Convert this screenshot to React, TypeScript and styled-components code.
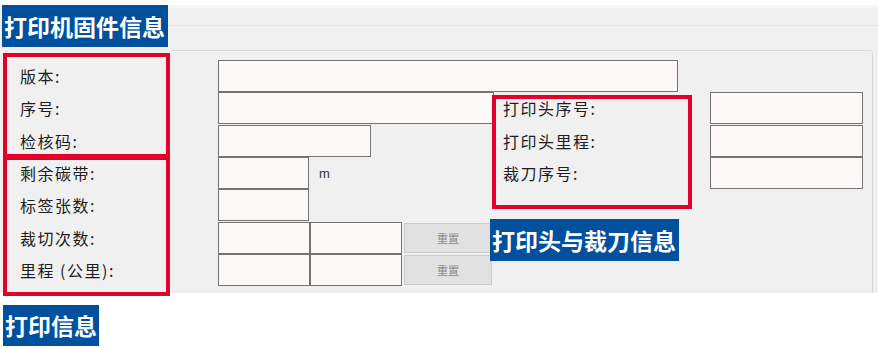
import React from "react";
import styled, { createGlobalStyle } from "styled-components";

const GlobalStyle = createGlobalStyle`
  html, body {
    margin: 0;
    padding: 0;
    background: #ffffff;
  }
  body {
    font-family: "Noto Sans CJK SC", "Liberation Sans", sans-serif;
  }
`;

const Page = styled.div`
  position: relative;
  width: 878px;
  height: 348px;
  overflow: hidden;
  background: #ffffff;
  padding-top: 5px;
  box-sizing: border-box;
`;

const Panel = styled.div`
  height: 288px;
  background: #f0f0f0;
  border-top: 3px solid #f6f6f6;
  box-sizing: border-box;
  display: flex;
  flex-direction: column;
  overflow: hidden;
`;

const TabStrip = styled.div`
  height: 17px;
  flex: none;
  border-bottom: 1px solid #e3e3e3;
`;

const GroupBox = styled.div`
  flex: 1;
  margin: 24px 5px 0 5px;
  border-left: 1px solid #dadada;
  border-right: 1px solid #d6d6d6;
  border-radius: 0 4px 0 0;
  background: linear-gradient(#dadada, #dadada) no-repeat right top / calc(100% - 165px) 1px;
  padding: 10px 0 0 14px;
`;

const Form = styled.div`
  display: grid;
  grid-template-columns: 198px 276px 216px 153px;
  grid-auto-rows: 32.33px;
`;

const Label = styled.div<{ $indent?: number }>`
  display: flex;
  align-items: center;
  font-size: 16px;
  letter-spacing: 1.5px;
  line-height: 1;
  color: #1e1e1e;
  padding-left: ${(p) => p.$indent ?? 0}px;
`;

const Controls = styled.div<{ $span?: boolean }>`
  display: flex;
  align-items: stretch;
  grid-column: ${(p) => (p.$span ? "2 / 4" : "auto")};
`;

const Empty = styled.div``;

const Field = styled.div<{ $w: number }>`
  width: ${(p) => p.$w}px;
  height: 32px;
  box-sizing: border-box;
  border: 1px solid #747474;
  background: #fdf9f9;
  flex: none;
`;

const Unit = styled.span`
  align-self: center;
  margin-left: 10px;
  font-family: "Liberation Sans", sans-serif;
  font-size: 13px;
  color: #333333;
`;

const ResetButton = styled.div`
  width: 88px;
  height: 30px;
  margin: 1px 0 0 2px;
  box-sizing: border-box;
  border: 1px solid #cccccc;
  background: #e1e1e1;
  display: flex;
  align-items: center;
  justify-content: center;
  font-size: 11px;
  color: #8a8a8a;
  flex: none;
`;

const RedFrame = styled.div<{ $x: number; $y: number; $w: number; $h: number }>`
  position: absolute;
  left: ${(p) => p.$x}px;
  top: ${(p) => p.$y}px;
  width: ${(p) => p.$w}px;
  height: ${(p) => p.$h}px;
  box-sizing: border-box;
  border: 4px solid #e4002d;
`;

const BlueTag = styled.div<{ $x: number; $y: number; $w: number; $h: number }>`
  position: absolute;
  left: ${(p) => p.$x}px;
  top: ${(p) => p.$y}px;
  width: ${(p) => p.$w}px;
  height: ${(p) => p.$h}px;
  box-sizing: border-box;
  background: #00509e;
  color: #ffffff;
  font-size: 23px;
  font-weight: 700;
  line-height: 1;
  display: flex;
  align-items: center;
  padding-left: 2px;
  white-space: nowrap;
`;

export default function App() {
  return (
    <Page>
      <GlobalStyle />
      <Panel>
        <TabStrip />
        <GroupBox>
          <Form>
            <Label>版本:</Label>
            <Controls $span>
              <Field $w={460} />
            </Controls>
            <Empty />

            <Label>序号:</Label>
            <Controls>
              <Field $w={276} />
            </Controls>
            <Label $indent={9}>打印头序号:</Label>
            <Controls>
              <Field $w={153} />
            </Controls>

            <Label>检核码:</Label>
            <Controls>
              <Field $w={153} />
            </Controls>
            <Label $indent={9}>打印头里程:</Label>
            <Controls>
              <Field $w={153} />
            </Controls>

            <Label>剩余碳带:</Label>
            <Controls>
              <Field $w={91} />
              <Unit>m</Unit>
            </Controls>
            <Label $indent={9}>裁刀序号:</Label>
            <Controls>
              <Field $w={153} />
            </Controls>

            <Label>标签张数:</Label>
            <Controls>
              <Field $w={91} />
            </Controls>
            <Empty />
            <Empty />

            <Label>裁切次数:</Label>
            <Controls>
              <Field $w={92} />
              <Field $w={92} />
              <ResetButton>重置</ResetButton>
            </Controls>
            <Empty />
            <Empty />

            <Label>里程 (公里):</Label>
            <Controls>
              <Field $w={92} />
              <Field $w={92} />
              <ResetButton>重置</ResetButton>
            </Controls>
          </Form>
        </GroupBox>
      </Panel>

      <RedFrame $x={3} $y={53} $w={167} $h={105} />
      <RedFrame $x={3} $y={156} $w={167} $h={140} />
      <RedFrame $x={492} $y={95} $w={200} $h={114} />

      <BlueTag $x={2} $y={5} $w={166} $h={42}>打印机固件信息</BlueTag>
      <BlueTag $x={490} $y={219} $w={189} $h={42}>打印头与裁刀信息</BlueTag>
      <BlueTag $x={3} $y={305} $w={96} $h={41}>打印信息</BlueTag>
    </Page>
  );
}
